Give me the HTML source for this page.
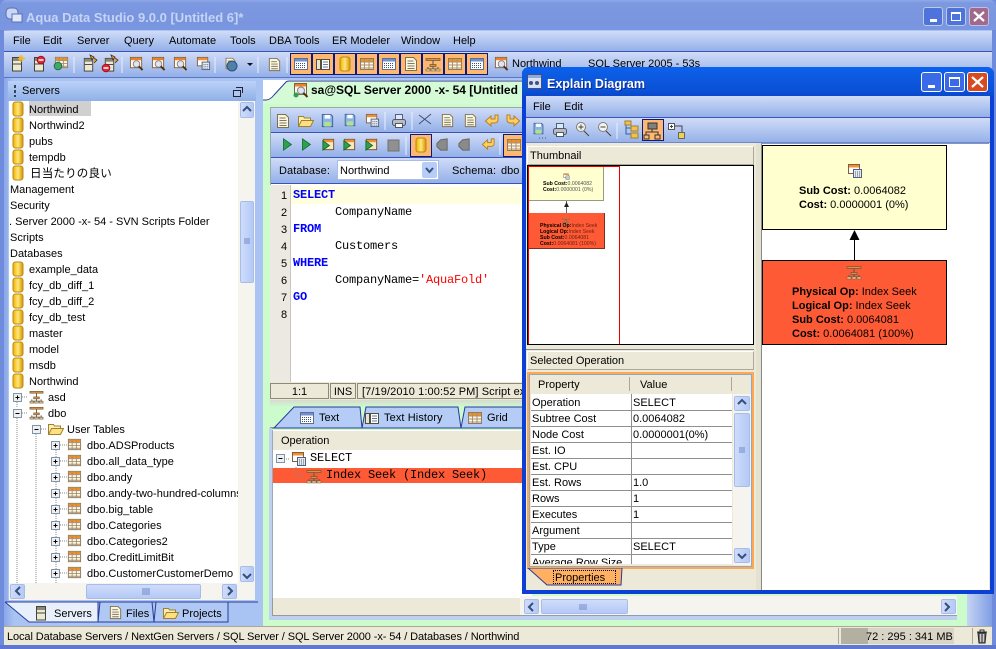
<!DOCTYPE html>
<html><head><meta charset="utf-8"><style>
html,body{margin:0;padding:0;width:996px;height:649px;overflow:hidden;background:#6f8bdc}
#r{position:relative;width:996px;height:649px;overflow:hidden;font:11px/16px "Liberation Sans","Noto Sans CJK JP",sans-serif;color:#000}
#r div,#r svg{position:absolute}
.t{white-space:nowrap;height:16px;margin-top:1px}
.m{font:12px/16px "Liberation Mono",monospace;letter-spacing:-.2px;white-space:pre;margin-top:0}
.k{color:#00f;font-weight:bold}
.bar{background:linear-gradient(#d0dcf8,#93b0e8)}
.o{background:#ffb870;border:1px solid #0a1a80;box-sizing:border-box}
.sb{background:linear-gradient(90deg,#cfdcfb,#b4c9f6);border:1px solid #fff;outline:1px solid #a8bce8;outline-offset:-1px;box-sizing:border-box;border-radius:2px}
.hd{background:#ece9d8;border:1px solid #fff;border-right-color:#aca899;border-bottom-color:#aca899;box-sizing:border-box;padding:2px 0 0 2px;line-height:15px}
.lnr{background:#8f8f8f;height:1px}
b{font-weight:bold}
.cell{background:#ece9d8;border:1px solid #8d8a78;box-sizing:border-box;text-align:center;line-height:16px}
</style></head><body><div id="r">

<svg width="0" height="0" style="left:0;top:0">
<defs>
<linearGradient id="g1" x1="0" x2="1" y1="0" y2="0"><stop offset="0" stop-color="#f0b000"/><stop offset=".5" stop-color="#ffe878"/><stop offset="1" stop-color="#d89000"/></linearGradient>
<symbol id="db" viewBox="0 0 16 16"><rect x="3" y="1" width="10" height="14" rx="2.500" fill="url(#g1)" stroke="#b88a10"/></symbol>
<symbol id="tb" viewBox="0 0 16 16"><rect x="1.500" y="2.500" width="13" height="11" fill="#fff8e8" stroke="#8a7a60"/><rect x="2" y="3" width="12" height="2.500" fill="#f09020"/><path d="M1.500 6h13M1.500 9h13M1.500 12h13M5.500 3v10M10 3v10" stroke="#a89070" fill="none"/></symbol>
<symbol id="gr" viewBox="0 0 16 16"><rect x="1.500" y="2.500" width="13" height="11" fill="#fff" stroke="#606f90"/><rect x="2" y="3" width="12" height="2.500" fill="#7090d0"/><path d="M3 7.500h10M3 9.500h10M3 11.500h10" stroke="#40506f" stroke-dasharray="1 1"/></symbol>
<symbol id="sv" viewBox="0 0 16 16"><rect x="3.500" y="1.500" width="9" height="13.500" fill="#ece8d4" stroke="#444438"/><rect x="4" y="2" width="8" height="3" fill="#8a8878"/><path d="M4 8h8" stroke="#444438"/></symbol>
<symbol id="sc" viewBox="0 0 16 16"><path d="M1 2.500h14v2H1zM5 8.500h6v2H5z" fill="#e89030" stroke="#6a5a40" stroke-width=".7"/><path d="M8 4.500v4M3 13h10M3 11v2M8 10.500v2.500M13 11v2" stroke="#556" fill="none"/><path d="M1 13h4v2H1zM6 13h4v2H6zM11 13h4v2h-4z" fill="#f0d090" stroke="#6a5a40" stroke-width=".6"/></symbol>
<symbol id="fo" viewBox="0 0 16 16"><path d="M.5 13.500V3.500h5l1 1.500h6v2.500" fill="#fff0b0" stroke="#a08030"/><path d="M.5 13.500l3-6h12l-3 6z" fill="#ffe080" stroke="#a08030"/></symbol>
<symbol id="mg" viewBox="0 0 16 16"><rect x="1.500" y="1.500" width="12" height="11" fill="#fff8f0" stroke="#806040"/><rect x="2" y="2" width="11" height="2.500" fill="#f08028"/><circle cx="8" cy="8.500" r="3.500" fill="#dfe6f2" stroke="#808080"/><path d="M10.500 11l4 4" stroke="#503010" stroke-width="2"/></symbol>
<symbol id="pg" viewBox="0 0 16 16"><path d="M2.500 1.500h8l3 3v10h-11z" fill="#fbf6e0" stroke="#806f50"/><path d="M4.500 5h6M4.500 7.500h7M4.500 10h7M4.500 12.500h7" stroke="#807860"/></symbol>
<symbol id="sl" viewBox="0 0 16 16"><rect x="1.500" y="1.500" width="11" height="9" fill="#fff" stroke="#806040"/><rect x="2" y="2" width="10" height="2.500" fill="#f09030"/><rect x="6.500" y="6.500" width="8" height="8" fill="#e8eaf0" stroke="#506080"/><path d="M8 9h5M8 11h5M8 13h5" stroke="#506080" stroke-dasharray="1 1"/></symbol>
<symbol id="fl" viewBox="0 0 16 16"><rect x="1.500" y="3.500" width="4" height="10" fill="#e8e4d0" stroke="#505040"/><rect x="6.500" y="3.500" width="8" height="10" fill="#fff" stroke="#505040"/><path d="M8 6h5M8 8.500h5M8 11h5" stroke="#6a7a9a"/></symbol>
<symbol id="sd" viewBox="0 0 16 16"><path d="M2.500 1.500h9l2 2v11h-11z" fill="#8ab4e8" stroke="#406090"/><rect x="5" y="2" width="6" height="4" fill="#fff"/><rect x="4.500" y="9.500" width="7" height="5" fill="#b0e090"/></symbol>
<symbol id="pr" viewBox="0 0 16 16"><rect x="4.500" y="1.500" width="7" height="5" fill="#dde8f8" stroke="#506080"/><rect x="1.500" y="6.500" width="13" height="6" rx="2" fill="#b8bcc8" stroke="#505868"/><rect x="4.500" y="10.500" width="7" height="4" fill="#fff" stroke="#505868"/></symbol>
<symbol id="gy" viewBox="0 0 16 16"><path d="M13 2L6 3 2 7v3l4 4 7 0z" fill="#8a8a8a" stroke="#666"/></symbol>
<symbol id="ar" viewBox="0 0 16 16"><path d="M14 2v5q0 3-4 3H7v3L1.500 8 7 3v3h4V2z" fill="#ffd060" stroke="#b88020"/></symbol>
<symbol id="ex" viewBox="0 0 10 10"><rect x=".5" y=".5" width="8" height="8" fill="#f0f0f0" stroke="#8095a8"/><path d="M2.500 4.500h4M4.500 2.500v4" stroke="#000"/></symbol>
<symbol id="cl" viewBox="0 0 10 10"><rect x=".5" y=".5" width="8" height="8" fill="#f0f0f0" stroke="#8095a8"/><path d="M2.500 4.500h4" stroke="#000"/></symbol>
<symbol id="play" viewBox="0 0 16 16"><path d="M4 1.500l9 6.500-9 6.500z" fill="#30a050" stroke="#107030"/></symbol>
<symbol id="pl2" viewBox="0 0 16 16"><rect x="2.500" y="2.500" width="11" height="11" fill="#f8e8c0" stroke="#705030"/><rect x="3" y="3" width="10" height="2.500" fill="#f09030"/><path d="M2 4l7 5-7 5z" fill="#30a050" stroke="#107030"/></symbol>
</defs></svg>

<!-- title -->
<div style="left:0;top:0;width:996px;height:31px;background:linear-gradient(#8fa9e8 0,#7c98e0 3px,#7995df 24px,#7a97e1);border-radius:6px 6px 0 0"></div>
<div class="t" style="left:26px;top:9px;font:bold 13px/16px 'Liberation Sans',sans-serif;color:#c5d3f4">Aqua Data Studio 9.0.0 [Untitled 6]*</div>
<svg style="left:5px;top:6px" width="18" height="18"><rect x="1" y="2" width="12" height="11" rx="4" fill="#c8d8f4" stroke="#5870a8"/><rect x="7" y="8" width="10" height="8" fill="#e0e8f8" stroke="#5870c0"/></svg>
<div style="left:923px;top:7px;width:20px;height:19px;background:#4f73dc;border:1px solid #bcd;border-radius:3px;box-sizing:border-box"></div>
<div style="left:930px;top:19px;width:7px;height:3px;background:#fff"></div>
<div style="left:946px;top:7px;width:20px;height:19px;background:#4f73dc;border:1px solid #bcd;border-radius:3px;box-sizing:border-box"></div>
<div style="left:951px;top:12px;width:10px;height:9px;border:1px solid #fff;border-top-width:2px;box-sizing:border-box"></div>
<div style="left:969px;top:7px;width:20px;height:19px;background:#a06a8c;border:1px solid #cbd;border-radius:3px;box-sizing:border-box"></div>
<svg style="left:969px;top:7px" width="20" height="19"><path d="M5 5l10 9M15 5L5 14" stroke="#fff" stroke-width="2.200"/></svg>

<!-- body -->
<div style="left:0;top:30px;width:4px;height:619px;background:#6f8bdc"></div>
<div style="left:992px;top:30px;width:4px;height:619px;background:#6f8bdc"></div>
<div style="left:4px;top:30px;width:988px;height:597px;background:linear-gradient(90deg,#8aa6e8,#a9c4f2 10px)"></div>
<div class="bar" style="left:4px;top:31px;width:988px;height:20px"></div>
<div style="left:4px;top:51px;width:988px;height:1px;background:#3c52b4"></div>
<div class="bar" style="left:4px;top:52px;width:988px;height:25px"></div>
<div style="left:4px;top:77px;width:988px;height:1px;background:#5a74c8"></div>
<div class="t" style="left:13px;top:32px">File</div>
<div class="t" style="left:43px;top:32px">Edit</div>
<div class="t" style="left:77px;top:32px">Server</div>
<div class="t" style="left:124px;top:32px">Query</div>
<div class="t" style="left:169px;top:32px">Automate</div>
<div class="t" style="left:230px;top:32px">Tools</div>
<div class="t" style="left:269px;top:32px">DBA Tools</div>
<div class="t" style="left:332px;top:32px">ER Modeler</div>
<div class="t" style="left:401px;top:32px">Window</div>
<div class="t" style="left:453px;top:32px">Help</div>

<!-- main toolbar -->
<div class="o" style="left:290px;top:53px;width:22px;height:22px"></div><div class="o" style="left:312px;top:53px;width:22px;height:22px"></div><div class="o" style="left:334px;top:53px;width:22px;height:22px"></div><div class="o" style="left:356px;top:53px;width:22px;height:22px"></div><div class="o" style="left:378px;top:53px;width:22px;height:22px"></div><div class="o" style="left:400px;top:53px;width:22px;height:22px"></div><div class="o" style="left:422px;top:53px;width:22px;height:22px"></div><div class="o" style="left:444px;top:53px;width:22px;height:22px"></div><div class="o" style="left:466px;top:53px;width:22px;height:22px"></div>
<div class="t" style="left:512px;top:55px">Northwind</div>
<div class="t" style="left:588px;top:55px">SQL Server 2005 - 53s</div>

<!-- left panel -->
<div style="left:8px;top:81px;width:250px;height:520px;background:#a9c4f2"></div>
<div class="bar" style="left:8px;top:81px;width:248px;height:20px;background:linear-gradient(#bcd2f8,#8fb0e8)"></div>
<div style="left:14px;top:85px;width:2px;height:12px;background:repeating-linear-gradient(#345 0 3px,transparent 3px 5px)"></div>
<div class="t" style="left:22px;top:82px">Servers</div>
<div style="left:233px;top:90px;width:8px;height:7px;border:1px solid #223;box-sizing:border-box;background:#b0c8f0"></div>
<div style="left:236px;top:87px;width:7px;height:6px;border:1px solid #223;border-left:0;border-bottom:0;box-sizing:border-box"></div>
<div style="left:9px;top:101px;width:246px;height:499px;background:#fff;overflow:hidden">
<div style="left:20px;top:0;width:62px;height:15px;background:#d0d0d0"></div>
<div class="t" style="left:20px;top:0">Northwind</div>
<div class="t" style="left:20px;top:16px">Northwind2</div>
<div class="t" style="left:20px;top:32px">pubs</div>
<div class="t" style="left:20px;top:48px">tempdb</div>
<div class="t" style="left:21px;top:64px;font-size:11.500px;letter-spacing:.2px">日当たりの良い</div>
<div class="t" style="left:1px;top:80px">Management</div>
<div class="t" style="left:1px;top:96px">Security</div>
<div class="t" style="left:0;top:112px">. Server 2000 -x- 54 - SVN Scripts Folder</div>
<div class="t" style="left:1px;top:128px">Scripts</div>
<div class="t" style="left:1px;top:144px">Databases</div>
<div class="t" style="left:20px;top:160px">example_data</div>
<div class="t" style="left:20px;top:176px">fcy_db_diff_1</div>
<div class="t" style="left:20px;top:192px">fcy_db_diff_2</div>
<div class="t" style="left:20px;top:208px">fcy_db_test</div>
<div class="t" style="left:20px;top:224px">master</div>
<div class="t" style="left:20px;top:240px">model</div>
<div class="t" style="left:20px;top:256px">msdb</div>
<div class="t" style="left:20px;top:272px">Northwind</div>
<div class="t" style="left:39px;top:288px">asd</div>
<div class="t" style="left:39px;top:304px">dbo</div>
<div class="t" style="left:58px;top:320px">User Tables</div>
<div class="t" style="left:78px;top:336px">dbo.ADSProducts</div>
<div class="t" style="left:78px;top:352px">dbo.all_data_type</div>
<div class="t" style="left:78px;top:368px">dbo.andy</div>
<div class="t" style="left:78px;top:384px;width:152px;overflow:hidden">dbo.andy-two-hundred-columns</div>
<div class="t" style="left:78px;top:400px">dbo.big_table</div>
<div class="t" style="left:78px;top:416px">dbo.Categories</div>
<div class="t" style="left:78px;top:432px">dbo.Categories2</div>
<div class="t" style="left:78px;top:448px">dbo.CreditLimitBit</div>
<div class="t" style="left:78px;top:464px">dbo.CustomerCustomerDemo</div>
</div>
<!-- left scrollbars -->
<div style="left:238px;top:101px;width:17px;height:482px;background:#f5f4ee"></div>
<div class="sb" style="left:240px;top:102px;width:14px;height:16px"></div>
<div class="sb" style="left:240px;top:201px;width:14px;height:82px"></div>
<div class="sb" style="left:240px;top:566px;width:14px;height:16px"></div>
<div style="left:9px;top:583px;width:246px;height:17px;background:#f5f4ee"></div>
<div class="sb" style="left:10px;top:584px;width:15px;height:15px"></div>
<div class="sb" style="left:86px;top:584px;width:115px;height:15px;background:linear-gradient(#cfdcfb,#b4c9f6)"></div>
<div class="sb" style="left:222px;top:584px;width:15px;height:15px"></div>
<svg style="left:0;top:0" width="260" height="649">
<path d="M243 111l4-4 4 4M243 574l4 4 4-4M20 587l-4 4 4 4M228 587l4 4-4 4" stroke="#34507a" stroke-width="2" fill="none"/>
<path d="M143 588v7M145 588v7M147 588v7M149 588v7M244 239h6M244 241h6M244 243h6" stroke="#7088c8"/>
<path d="M17 402v6M17 418v165M36 434v149M56 450v133M22 397h6M22 413h6M41 429h6M60 445h7M60 461h7M60 477h7M60 493h7M60 509h7M60 525h7M60 541h7M60 557h7M60 573h7" stroke="#888" stroke-dasharray="1 1" fill="none"/>
<use href="#db" x="10" y="101" width="16" height="16"/><use href="#db" x="10" y="117" width="16" height="16"/><use href="#db" x="10" y="133" width="16" height="16"/><use href="#db" x="10" y="149" width="16" height="16"/><use href="#db" x="10" y="165" width="16" height="16"/>
<use href="#db" x="10" y="261" width="16" height="16"/><use href="#db" x="10" y="277" width="16" height="16"/><use href="#db" x="10" y="293" width="16" height="16"/><use href="#db" x="10" y="309" width="16" height="16"/><use href="#db" x="10" y="325" width="16" height="16"/><use href="#db" x="10" y="341" width="16" height="16"/><use href="#db" x="10" y="357" width="16" height="16"/><use href="#db" x="10" y="373" width="16" height="16"/>
<use href="#ex" x="13" y="393" width="10" height="10"/><use href="#cl" x="13" y="409" width="10" height="10"/><use href="#cl" x="32" y="425" width="10" height="10"/>
<use href="#sc" x="29" y="389" width="15" height="15"/><use href="#sc" x="29" y="405" width="15" height="15"/><use href="#fo" x="48" y="421" width="16" height="16"/>
<use href="#ex" x="51" y="441" width="10" height="10"/><use href="#ex" x="51" y="457" width="10" height="10"/><use href="#ex" x="51" y="473" width="10" height="10"/><use href="#ex" x="51" y="489" width="10" height="10"/><use href="#ex" x="51" y="505" width="10" height="10"/><use href="#ex" x="51" y="521" width="10" height="10"/><use href="#ex" x="51" y="537" width="10" height="10"/><use href="#ex" x="51" y="553" width="10" height="10"/><use href="#ex" x="51" y="569" width="10" height="10"/>
<use href="#tb" x="67" y="437" width="15" height="15"/><use href="#tb" x="67" y="453" width="15" height="15"/><use href="#tb" x="67" y="469" width="15" height="15"/><use href="#tb" x="67" y="485" width="15" height="15"/><use href="#tb" x="67" y="501" width="15" height="15"/><use href="#tb" x="67" y="517" width="15" height="15"/><use href="#tb" x="67" y="533" width="15" height="15"/><use href="#tb" x="67" y="549" width="15" height="15"/><use href="#tb" x="67" y="565" width="15" height="15"/>
<!-- bottom tabs -->
<path d="M5 602l24 20h69v-20" fill="#e8f0fc" stroke="#2a3a9a"/>
<path d="M98 622l2-20h52l2 20z" fill="#b0c8f4" stroke="#2a3a9a"/>
<path d="M154 622l2-20h72v20z" fill="#b0c8f4" stroke="#2a3a9a"/>
<path d="M5 602h253" stroke="#2a3a9a"/>
<use href="#sv" x="33" y="605" width="16" height="16"/><use href="#pg" x="108" y="605" width="15" height="15"/><use href="#fo" x="163" y="605" width="16" height="16"/>
</svg>
<div class="t" style="left:54px;top:605px">Servers</div>
<div class="t" style="left:126px;top:605px">Files</div>
<div class="t" style="left:182px;top:605px">Projects</div>

<!-- right document area -->
<div style="left:263px;top:80px;width:700px;height:20px;background:#fff"></div>
<div style="left:263px;top:100px;width:700px;height:526px;background:#ccfccc"></div>
<svg style="left:263px;top:80px" width="262" height="24"><path d="M0 20h3q4 0 8-5L23 2q1-1 3-1h236v23H0z" fill="#d4fbd6"/><path d="M0 20h3q4 0 8-5L23 2q1-1 3-1h236" fill="none" stroke="#2a3a9a"/></svg>
<div class="t" style="left:311px;top:81px;font:bold 12px/16px 'Liberation Sans',sans-serif">sa@SQL Server 2000 -x- 54 [Untitled</div>
<div style="left:270px;top:107px;width:260px;height:277px;background:#fff;border:1px solid #9aa"></div>
<div class="bar" style="left:271px;top:108px;width:260px;height:24px"></div>
<div class="bar" style="left:271px;top:133px;width:260px;height:24px"></div>
<div class="bar" style="left:271px;top:158px;width:260px;height:25px"></div>
<div style="left:271px;top:132px;width:260px;height:1px;background:#3c52b4"></div>
<div style="left:271px;top:157px;width:260px;height:1px;background:#3c52b4"></div>
<div style="left:271px;top:183px;width:260px;height:1px;background:#3c52b4"></div>
<div class="o" style="left:410px;top:134px;width:22px;height:23px"></div>
<div class="o" style="left:503px;top:134px;width:22px;height:23px"></div>
<div class="t" style="left:279px;top:162px;letter-spacing:.1px">Database:</div>
<div style="left:337px;top:160px;width:102px;height:20px;background:#fff;border:1px solid #a8bce8;box-sizing:border-box"></div>
<div style="left:422px;top:162px;width:15px;height:16px;background:#b8ccf8;border-radius:2px"></div>
<svg style="left:422px;top:162px" width="15" height="16"><path d="M4 6l3.500 4L11 6" stroke="#34507a" stroke-width="2" fill="none"/></svg>
<div class="t" style="left:340px;top:162px">Northwind</div>
<div class="t" style="left:452px;top:162px;letter-spacing:.1px">Schema:</div>
<div class="t" style="left:501px;top:162px">dbo</div>
<!-- editor -->
<div style="left:270px;top:185px;width:260px;height:197px;background:#fff"></div>
<div style="left:270px;top:185px;width:20px;height:197px;background:#ece9e2"></div>
<div style="left:290px;top:185px;width:1px;height:197px;background:#c8c8c0"></div>
<div style="left:291px;top:187px;width:240px;height:17px;background:#ffffe0"></div>
<div class="t" style="left:281px;top:187px">1</div><div class="t" style="left:281px;top:204px">2</div><div class="t" style="left:281px;top:221px">3</div><div class="t" style="left:281px;top:238px">4</div><div class="t" style="left:281px;top:255px">5</div><div class="t" style="left:281px;top:272px">6</div><div class="t" style="left:281px;top:289px">7</div><div class="t" style="left:281px;top:306px">8</div>
<div class="t m k" style="left:293px;top:187px">SELECT</div>
<div class="t m" style="left:335px;top:204px">CompanyName</div>
<div class="t m k" style="left:293px;top:221px">FROM</div>
<div class="t m" style="left:335px;top:238px">Customers</div>
<div class="t m k" style="left:293px;top:255px">WHERE</div>
<div class="t m" style="left:335px;top:272px">CompanyName=<span style="color:#f00">'AquaFold'</span></div>
<div class="t m k" style="left:293px;top:289px">GO</div>
<!-- status -->
<div style="left:270px;top:382px;width:260px;height:18px;background:#ece9d8"></div>
<div class="cell" style="left:270px;top:383px;width:59px;height:16px">1:1</div>
<div class="cell" style="left:330px;top:383px;width:26px;height:16px">INS</div>
<div class="cell" style="left:357px;top:383px;width:180px;height:16px;text-align:left;padding-left:4px;letter-spacing:.1px">[7/19/2010 1:00:52 PM] Script ex</div>
<div style="left:270px;top:400px;width:260px;height:28px;background:linear-gradient(#d8d8d0,#ccfccc 25%)"></div>
<!-- bottom tabs -->
<svg style="left:270px;top:405px" width="260" height="25"><path d="M4 23L24 2h66l2 21zM92 23l4-21h92l3 21zM191 23l4-21h70v21z" fill="#b4ccf6" stroke="#2a3a9a"/><path d="M0 23h260" stroke="#2a3a9a"/></svg>
<div style="left:269px;top:428px;width:3px;height:192px;background:#c0d0f0"></div>
<div style="left:269px;top:616px;width:700px;height:4px;background:#c0d0f0"></div>
<div style="left:272px;top:430px;width:260px;height:168px;background:#fff;border-left:1px solid #9ab;box-sizing:border-box"></div>
<div style="left:272px;top:598px;width:260px;height:18px;background:#ece9d8;border-left:1px solid #999;border-bottom:1px solid #999;box-sizing:border-box"></div>
<div class="t" style="left:319px;top:409px">Text</div>
<div class="t" style="left:384px;top:409px;letter-spacing:.1px">Text History</div>
<div class="t" style="left:487px;top:409px">Grid</div>
<div style="left:273px;top:431px;width:260px;height:19px;background:#ece9d8"><div class="t" style="left:8px;top:1px">Operation</div></div>
<div class="t m" style="left:310px;top:450px">SELECT</div>
<div style="left:273px;top:468px;width:260px;height:15px;background:#ff5a36"></div>
<div class="t m" style="left:326px;top:467px">Index Seek (Index Seek)</div>
<!-- main hscroll -->
<div style="left:520px;top:596px;width:438px;height:20px;background:#f5f4ee;border-bottom:1px solid #8e9cb8;box-sizing:border-box"></div>
<div class="sb" style="left:524px;top:599px;width:15px;height:15px"></div>
<div class="sb" style="left:541px;top:599px;width:87px;height:15px;background:linear-gradient(#cfdcfb,#b4c9f6)"></div>
<div class="sb" style="left:941px;top:599px;width:15px;height:15px"></div>
<svg style="left:520px;top:596px" width="440" height="20"><path d="M13 7l-4 4 4 4M425 7l4 4-4 4" stroke="#34507a" stroke-width="2" fill="none"/><path d="M60 8v6M62 8v6M64 8v6M66 8v6" stroke="#7088c8"/></svg>
<div style="left:957px;top:590px;width:10px;height:36px;background:#ccfccc"></div>
<div style="left:967px;top:590px;width:25px;height:37px;background:linear-gradient(90deg,#c4d4f4,#7f9ee4)"></div>

<svg style="left:0;top:0" width="522" height="200">
<g>
<use href="#sv" x="9" y="56" width="16" height="16"/><path d="M21 55v7M18 58.500h7M19 56.500l4 4M23 56.500l-4 4" stroke="#f0b820" stroke-width="1.200"/>
<use href="#sv" x="31" y="56" width="16" height="16"/><circle cx="41" cy="60" r="3.800" fill="#e02838" stroke="#a01020"/><path d="M38.500 60h5" stroke="#fff" stroke-width="1.500"/>
<use href="#tb" x="54" y="55" width="15" height="15"/><circle cx="58" cy="66" r="3.800" fill="#40a868" stroke="#207040"/>
<use href="#sv" x="81" y="57" width="15" height="15"/><path d="M90 55l4 2-2 3zM94 58l3 2-3 3" fill="#f0a020" stroke="#403020" stroke-width=".8"/>
<use href="#sv" x="102" y="57" width="15" height="15"/><path d="M111 55l4 2-2 3zM115 58l3 2-3 3" fill="#f0a020" stroke="#403020" stroke-width=".8"/><circle cx="106" cy="68" r="3.800" fill="#e02838" stroke="#a01020"/><path d="M103.500 68h5" stroke="#fff" stroke-width="1.500"/>
<use href="#mg" x="129" y="56" width="15" height="15"/><use href="#mg" x="151" y="56" width="15" height="15"/><use href="#mg" x="173" y="56" width="15" height="15"/><use href="#sl" x="196" y="56" width="15" height="15"/>
<use href="#pg" x="224" y="56" width="13" height="15"/><circle cx="232" cy="66" r="5" fill="#5080a8" stroke="#305070"/><use href="#pg" x="267" y="57" width="15" height="15"/>
<path d="M74 57v16M122 57v16M215 57v16M258 57v16M287 57v16" fill="none" stroke="#e8f0fc"/>
<path d="M247 63h6l-3 3z" fill="#111"/>
<use href="#gr" x="293" y="56" width="16" height="16"/><use href="#fl" x="315" y="56" width="16" height="16"/><use href="#db" x="337" y="56" width="16" height="16"/><use href="#tb" x="359" y="56" width="16" height="16"/><use href="#gr" x="381" y="56" width="16" height="16"/><use href="#pg" x="403" y="56" width="16" height="16"/><use href="#sc" x="425" y="56" width="16" height="16"/><use href="#tb" x="447" y="56" width="16" height="16"/><use href="#gr" x="469" y="56" width="16" height="16"/>
<use href="#mg" x="494" y="56" width="15" height="15"/><use href="#mg" x="570" y="56" width="15" height="15"/>
<use href="#mg" x="293" y="82" width="16" height="16"/>
<circle cx="296" cy="95" r="2.500" fill="#30a050"/>
<use href="#pg" x="275" y="113" width="16" height="16"/><use href="#fo" x="298" y="113" width="16" height="16"/><use href="#sd" x="320" y="113" width="15" height="15"/><use href="#sd" x="343" y="113" width="14" height="14"/><use href="#sl" x="365" y="113" width="15" height="15"/>
<use href="#pr" x="391" y="113" width="16" height="16"/><use href="#pg" x="440" y="113" width="15" height="15"/><use href="#pg" x="463" y="113" width="15" height="15"/><use href="#ar" x="484" y="113" width="16" height="16"/>
<g transform="translate(521 113) scale(-1 1)"><use href="#ar" width="16" height="16"/></g>
<path d="M419 124l12-10M419 115l12 9" stroke="#405070" fill="none"/>
<path d="M385 112v18M412 112v18M406 137v18M500 137v18" stroke="#e8f0fc"/>
<use href="#play" x="280" y="137" width="14" height="15"/><use href="#play" x="299" y="137" width="14" height="15"/><use href="#pl2" x="321" y="137" width="15" height="15"/><use href="#pl2" x="342" y="137" width="15" height="15"/><use href="#pl2" x="364" y="137" width="15" height="15"/>
<rect x="388" y="140" width="11" height="11" fill="#909090" stroke="#707070"/>
<use href="#db" x="413" y="137" width="16" height="16"/><use href="#gy" x="435" y="137" width="15" height="15"/><use href="#gy" x="457" y="137" width="15" height="15"/><use href="#ar" x="481" y="137" width="15" height="15"/><use href="#tb" x="506" y="137" width="16" height="16"/>
</g>
</svg>
<svg style="left:270px;top:400px" width="252" height="90">
<use href="#gr" x="29" y="10" width="16" height="16"/><use href="#fl" x="94" y="10" width="16" height="16"/><use href="#tb" x="197" y="10" width="16" height="16"/>
<use href="#cl" x="6" y="54" width="10" height="10"/><use href="#sl" x="21" y="51" width="16" height="16"/>
<path d="M16 59h4M26 67v9h9" stroke="#888" stroke-dasharray="1 1" fill="none"/>
<use href="#sc" x="36" y="68" width="16" height="16"/>
</svg>

<!-- Explain window -->
<div style="left:522px;top:67px;width:472px;height:527px;background:#0c40d4;border-radius:7px 7px 0 0"></div>
<div style="left:522px;top:67px;width:472px;height:29px;background:linear-gradient(#0a62f0,#0d5ae0 30%,#0a52d8 80%,#0a48cc);border-radius:7px 7px 0 0"></div>
<div style="left:526px;top:96px;width:464px;height:494px;background:#ece9d8"></div>
<div class="t" style="left:547px;top:75px;font:bold 12.500px/16px 'Liberation Sans',sans-serif;color:#fff;text-shadow:1px 1px #0a2a90">Explain Diagram</div>
<svg style="left:527px;top:74px" width="16" height="16"><rect x=".5" y=".5" width="14" height="14" fill="#d8e0f4" stroke="#405080"/><rect x="1" y="1" width="13" height="3" fill="#90a8e0"/><circle cx="4" cy="9" r="2" fill="#405080"/><circle cx="10" cy="9" r="2" fill="#405080"/></svg>
<div style="left:921px;top:72px;width:21px;height:20px;background:#3a6ae8;border:1px solid #fff;border-radius:3px;box-sizing:border-box"></div>
<div style="left:928px;top:85px;width:7px;height:3px;background:#fff"></div>
<div style="left:944px;top:72px;width:21px;height:20px;background:#3a6ae8;border:1px solid #fff;border-radius:3px;box-sizing:border-box"></div>
<div style="left:949px;top:77px;width:11px;height:10px;border:1px solid #fff;border-top-width:2px;box-sizing:border-box"></div>
<div style="left:967px;top:72px;width:21px;height:20px;background:#d84a20;border:1px solid #fff;border-radius:3px;box-sizing:border-box"></div>
<svg style="left:967px;top:72px" width="21" height="20"><path d="M5 5l11 10M16 5L5 15" stroke="#fff" stroke-width="2.200"/></svg>
<div class="bar" style="left:526px;top:96px;width:464px;height:21px"></div>
<div style="left:526px;top:117px;width:464px;height:1px;background:#3c52b4"></div>
<div class="bar" style="left:526px;top:118px;width:464px;height:25px"></div>
<div style="left:526px;top:142px;width:464px;height:1px;background:#7088c8"></div>
<div class="t" style="left:533px;top:98px">File</div>
<div class="t" style="left:564px;top:98px">Edit</div>
<div class="o" style="left:642px;top:119px;width:22px;height:22px"></div>
<svg style="left:526px;top:118px" width="170" height="24">
<use href="#sd" x="6" y="4" width="13" height="13"/><path d="M13 20h1M16 20h1M19 20h1" stroke="#556"/>
<use href="#pr" x="26" y="4" width="16" height="16"/>
<circle cx="55" cy="9" r="4.500" fill="#f0f4f8" stroke="#808070"/><path d="M52.500 9h5M55 6.500v5M58 13l5 5" stroke="#504030"/>
<circle cx="77" cy="9" r="4.500" fill="#f0f4f8" stroke="#808070"/><path d="M74.500 9h5M80 13l5 5" stroke="#504030"/>
<path d="M91 5v16" stroke="#e8f0fc"/>
<path d="M100 5v11h5M100 10h5" stroke="#3060a0" fill="none"/><rect x="99" y="3" width="6" height="4" fill="#f0c050" stroke="#a08030"/><rect x="105" y="8" width="7" height="5" fill="#f0c050" stroke="#a08030"/><rect x="105" y="15" width="7" height="5" fill="#f0c050" stroke="#a08030"/>
<rect x="122" y="5" width="9" height="6" fill="#808080" stroke="#333"/><path d="M126 11v3M120 17v-3h12v3" stroke="#333" fill="none"/><rect x="118" y="17" width="5" height="4" fill="none" stroke="#333"/><rect x="129" y="17" width="5" height="4" fill="none" stroke="#333"/>
<rect x="142.500" y="5.500" width="6" height="6" fill="#fff" stroke="#555"/><path d="M144 8.500h3M145.500 7v3M149 8h7v6" stroke="#444" fill="none"/><rect x="152.500" y="14.500" width="6" height="6" fill="#f0d050" stroke="#666"/>
</svg>

<!-- left pane -->
<div class="hd" style="left:527px;top:146px;width:227px;height:19px">Thumbnail</div>
<div style="left:527px;top:165px;width:227px;height:180px;background:#fff;border:1px solid #000;box-sizing:border-box"></div>
<div style="left:528px;top:166px;width:92px;height:178px;border:1px solid #e00;border-width:1px 1px 0 1px;box-sizing:border-box"></div>
<div style="left:529px;top:167px;width:75px;height:34px;background:#ffffd0;border-right:1px solid #999980;border-bottom:1px solid #999980;box-sizing:border-box"></div>
<div style="left:529px;top:213px;width:76px;height:36px;background:#ff5a36;border-right:1px solid #803020;border-bottom:1px solid #803020;box-sizing:border-box"></div>
<div style="left:566px;top:201px;width:1px;height:12px;background:#666"></div>
<svg style="left:561px;top:201px" width="11" height="7"><path d="M5.500 1l-2.500 5h5z" fill="#222"/></svg>
<svg style="left:563px;top:173px" width="7" height="7"><use href="#sl" width="7" height="7"/></svg>
<svg style="left:562px;top:217px" width="8" height="8"><use href="#sc" width="8" height="8"/></svg>
<div class="t" style="left:543px;top:180px;font-size:5.200px;line-height:6px;height:6px;color:#555"><b style="color:#000">Sub Cost:</b>0.0064082</div>
<div class="t" style="left:543px;top:186px;font-size:5.200px;line-height:6px;height:6px;color:#555"><b style="color:#000">Cost:</b>0.0000001 (0%)</div>
<div class="t" style="left:540px;top:222px;font-size:5.200px;line-height:6px;height:6px;color:#702010"><b style="color:#000">Physical Op:</b>Index Seek</div>
<div class="t" style="left:540px;top:228px;font-size:5.200px;line-height:6px;height:6px;color:#702010"><b style="color:#000">Logical Op:</b>Index Seek</div>
<div class="t" style="left:540px;top:234px;font-size:5.200px;line-height:6px;height:6px;color:#702010"><b style="color:#000">Sub Cost:</b>0.0064081</div>
<div class="t" style="left:540px;top:240px;font-size:5.200px;line-height:6px;height:6px;color:#702010"><b style="color:#000">Cost:</b>0.0064081 (100%)</div>
<div style="left:526px;top:349px;width:228px;height:1px;background:#888"></div>
<div class="hd" style="left:527px;top:351px;width:227px;height:19px">Selected Operation</div>
<!-- table -->
<div style="left:527px;top:372px;width:227px;height:197px;border:2px solid #ffa850;box-sizing:border-box;background:#ece9d8;outline:0"></div>
<div style="left:529px;top:374px;width:223px;height:193px;border:1px solid #8fa8c8;box-sizing:border-box"></div>
<div style="left:530px;top:375px;width:221px;height:20px;background:#ece9d8"></div>
<div class="t" style="left:538px;top:376px">Property</div>
<div class="t" style="left:640px;top:376px">Value</div>
<div style="left:629px;top:377px;width:1px;height:14px;background:#aca899"></div>
<div style="left:731px;top:377px;width:1px;height:14px;background:#aca899"></div>
<div style="left:531px;top:394px;width:201px;height:170px;background:#fff;overflow:hidden">
<div style="left:100px;top:0;width:1px;height:170px;background:#8f8f8f"></div>
<div style="left:201px;top:0;width:1px;height:170px;background:#8f8f8f"></div>
<div class="lnr" style="left:0;top:16px;width:201px"></div><div class="lnr" style="left:0;top:32px;width:201px"></div><div class="lnr" style="left:0;top:48px;width:201px"></div><div class="lnr" style="left:0;top:64px;width:201px"></div><div class="lnr" style="left:0;top:80px;width:201px"></div><div class="lnr" style="left:0;top:96px;width:201px"></div><div class="lnr" style="left:0;top:112px;width:201px"></div><div class="lnr" style="left:0;top:128px;width:201px"></div><div class="lnr" style="left:0;top:144px;width:201px"></div><div class="lnr" style="left:0;top:160px;width:201px"></div>
<div class="t" style="left:1px;top:0">Operation</div><div class="t" style="left:102px;top:0">SELECT</div>
<div class="t" style="left:1px;top:16px">Subtree Cost</div><div class="t" style="left:102px;top:16px">0.0064082</div>
<div class="t" style="left:1px;top:32px">Node Cost</div><div class="t" style="left:102px;top:32px">0.0000001(0%)</div>
<div class="t" style="left:1px;top:48px">Est. IO</div>
<div class="t" style="left:1px;top:64px">Est. CPU</div>
<div class="t" style="left:1px;top:80px">Est. Rows</div><div class="t" style="left:102px;top:80px">1.0</div>
<div class="t" style="left:1px;top:96px">Rows</div><div class="t" style="left:102px;top:96px">1</div>
<div class="t" style="left:1px;top:112px">Executes</div><div class="t" style="left:102px;top:112px">1</div>
<div class="t" style="left:1px;top:128px">Argument</div>
<div class="t" style="left:1px;top:144px">Type</div><div class="t" style="left:102px;top:144px">SELECT</div>
<div class="t" style="left:1px;top:160px">Average Row Size</div>
</div>
<div style="left:733px;top:394px;width:18px;height:171px;background:#f5f4ee"></div>
<div class="sb" style="left:734px;top:396px;width:16px;height:15px"></div>
<div class="sb" style="left:734px;top:413px;width:16px;height:74px"></div>
<div class="sb" style="left:734px;top:548px;width:16px;height:15px"></div>
<svg style="left:733px;top:394px" width="18" height="171"><path d="M5 10l4-4 4 4M5 160l4 4 4-4" stroke="#34507a" stroke-width="2" fill="none"/><path d="M6 54h6M6 56h6M6 58h6" stroke="#7088c8"/></svg>
<svg style="left:527px;top:568px" width="96" height="20"><path d="M1 0l19 17h74l1-17z" fill="#ffb060" stroke="#2a3a9a"/></svg>
<div class="t" style="left:555px;top:569px">Properties</div>
<div style="left:553px;top:570px;width:63px;height:14px;border:1px dotted #000;box-sizing:border-box"></div>

<div style="left:756px;top:143px;width:5px;height:447px;background:#e4e1d0"></div>
<!-- right pane -->
<div style="left:761px;top:143px;width:228px;height:447px;background:#fff;border-left:1px solid #888;border-top:1px solid #8094c8;box-sizing:border-box"></div>
<div style="left:762px;top:145px;width:185px;height:85px;background:#ffffd0;border:1px solid #000;box-sizing:border-box"></div>
<div style="left:762px;top:260px;width:185px;height:85px;background:#ff5a36;border:1px solid #000;box-sizing:border-box"></div>
<svg style="left:849px;top:229px" width="12" height="32"><path d="M5.500 1L.5 11h10z" fill="#000"/><path d="M5.500 10v21" stroke="#000"/></svg>
<svg style="left:847px;top:163px" width="16" height="16"><use href="#sl" width="16" height="16"/></svg>
<svg style="left:846px;top:264px" width="16" height="16"><use href="#sc" width="16" height="16"/></svg>
<div class="t" style="left:799px;top:182px"><b>Sub Cost:</b> 0.0064082</div>
<div class="t" style="left:799px;top:196px"><b>Cost:</b> 0.0000001 (0%)</div>
<div class="t" style="left:792px;top:283px"><b>Physical Op:</b> Index Seek</div>
<div class="t" style="left:792px;top:297px"><b>Logical Op:</b> Index Seek</div>
<div class="t" style="left:792px;top:311px"><b>Sub Cost:</b> 0.0064081</div>
<div class="t" style="left:792px;top:325px"><b>Cost:</b> 0.0064081 (100%)</div>

<!-- status bar -->
<div style="left:4px;top:626px;width:988px;height:1px;background:#aca899"></div>
<div style="left:4px;top:627px;width:988px;height:18px;background:#ece9d8"></div>
<div style="left:0;top:645px;width:996px;height:4px;background:#5f78cf"></div>
<div class="t" style="left:7px;top:628px;letter-spacing:-.1px">Local Database Servers / NextGen Servers / SQL Server / SQL Server 2000 -x- 54 / Databases / Northwind</div>
<div style="left:838px;top:628px;width:1px;height:16px;background:#aca899"></div>
<div style="left:841px;top:628px;width:113px;height:16px;background:#d8d5c6"></div>
<div style="left:841px;top:628px;width:27px;height:16px;background:#b3b0a2"></div>
<div class="t" style="left:866px;top:628px">72 : 295 : 341 MB</div>
<div style="left:972px;top:628px;width:1px;height:16px;background:#aca899"></div>
<svg style="left:976px;top:629px" width="13" height="15"><path d="M1 3h10M4 3V1h4v2" stroke="#333" fill="none"/><path d="M2 4h8l-1 10H3z" fill="#777" stroke="#222"/><path d="M4.500 5v8M7.500 5v8" stroke="#ccc"/></svg>
</div></body></html>
